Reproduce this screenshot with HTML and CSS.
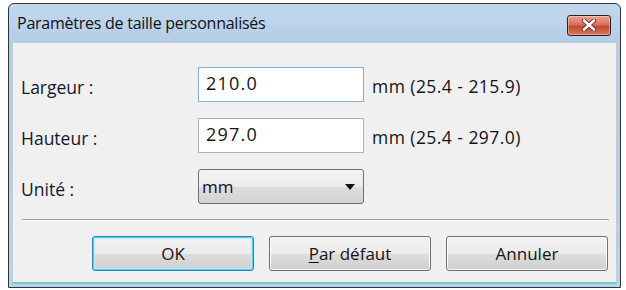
FILE: index.html
```html
<!DOCTYPE html>
<html lang="fr">
<head>
<meta charset="utf-8">
<title>Paramètres de taille personnalisés</title>
<link rel="stylesheet" href="styles.css">
</head>
<body>
<div class="window">
  <div class="titlebar">
    <span class="title">Paramètres de taille personnalisés</span>
    <button class="close" aria-label="Fermer">
      <svg width="16" height="12" viewBox="0 0 16 12"><path d="M3 1.5 L13 10.5 M13 1.5 L3 10.5" stroke="#5a2020" stroke-width="4.2" stroke-linecap="round"/><path d="M3 1.5 L13 10.5 M13 1.5 L3 10.5" stroke="#ffffff" stroke-width="2.6" stroke-linecap="round"/></svg>
    </button>
  </div>
  <div class="client">
    <div class="form">
      <label class="lbl">Largeur :</label>
      <div class="field focus">210.0</div>
      <span class="range">mm (25.4 - 215.9)</span>
      <label class="lbl">Hauteur :</label>
      <div class="field">297.0</div>
      <span class="range">mm (25.4 - 297.0)</span>
      <label class="lbl">Unité :</label>
      <div class="select"><span>mm</span><span class="arrow"></span></div>
      <span></span>
    </div>
    <div class="sep"></div>
    <div class="buttons">
      <button class="btn default">OK</button>
      <button class="btn"><u>P</u>ar défaut</button>
      <button class="btn">Annuler</button>
    </div>
  </div>
</div>
</body>
</html>
```
FILE: styles.css
```css
html, body { margin: 0; padding: 0; background: #ffffff; }
body { width: 626px; height: 290px; overflow: hidden; font-family: "Open Sans", "Noto Sans", sans-serif; }
.window {
  margin: 3px 0 0 8px;
  width: 613px;
  height: 285px;
  border: 1px solid #2f3336;
  border-radius: 6px 6px 0 0;
  background: linear-gradient(#c3d8ee, #b3cde8 40px, #b9d1ea);
  display: flex;
  flex-direction: column;
  box-sizing: border-box;
}
.titlebar {
  height: 38px;
  display: flex;
  align-items: center;
  justify-content: space-between;
  padding: 0 9px 0 8px;
  flex: none;
}
.title { font-size: 16px; color: #111; letter-spacing: -0.25px; }
.close {
  width: 44px; height: 21px;
  border: 1px solid #3a1d1d;
  border-radius: 3px;
  background: linear-gradient(#e8a493, #d7705b 45%, #c24a34 55%, #d9775f);
  display: flex; align-items: center; justify-content: center;
  padding: 0; margin-top: 4px;
  box-shadow: inset 0 0 0 1px rgba(255,255,255,0.35);
}
.close svg { display: block; }
.client {
  flex: 1;
  margin: 0 3px 3px 3px;
  background: #f0f0f0;
  border: 1px solid #c4ccd4;
  border-bottom: 2px solid #6fd0d0;
  display: flex;
  flex-direction: column;
  color: #111;
}
.form {
  display: grid;
  grid-template-columns: 169px 166px auto;
  grid-auto-rows: 35px;
  row-gap: 16px;
  column-gap: 8px;
  align-items: center;
  padding: 24px 0 0 8px;
  font-size: 17.5px;
}
.lbl { color: #14182a; padding-top: 5px; }
.field {
  height: 35px; box-sizing: border-box;
  border: 1px solid #acb3bb;
  background: #fff;
  padding: 0 7px 3px;
  display: flex; align-items: center;
  font-size: 18px;
  letter-spacing: 1.2px;
  color: #141414;
}
.field.focus { border-color: #87aed3; }
.range { color: #141414; padding-top: 3px; letter-spacing: 0.45px; }
.select {
  height: 35px; box-sizing: border-box;
  border: 1px solid #707070;
  border-radius: 3px;
  background: linear-gradient(#f4f4f4, #ebebeb 50%, #dddddd 51%, #d3d3d3);
  display: flex; align-items: center; justify-content: space-between;
  padding: 0 8px 0 3px;
  font-size: 17px;
}
.arrow { width: 0; height: 0; border-left: 5px solid transparent; border-right: 5px solid transparent; border-top: 6px solid #111; }
.sep {
  margin: 15px 7px 0 9px;
  height: 1px;
  background: #a0a0a0;
  border-bottom: 1px solid #ffffff;
}
.buttons {
  display: flex;
  justify-content: flex-end;
  gap: 15px;
  padding: 15px 8px 0 0;
}
.btn {
  width: 162px; height: 35px;
  border: 1px solid #707070;
  border-radius: 3px;
  background: linear-gradient(#f2f2f2, #ebebeb 50%, #dddddd 51%, #cfcfcf);
  font-family: inherit;
  font-size: 17px;
  color: #141414;
  padding: 0;
  box-shadow: inset 0 0 0 1px #fcfcfc;
}
.btn u { text-decoration-thickness: 1px; text-underline-offset: 2px; }
.btn.default {
  border-color: #3c7fb1;
  box-shadow: inset 0 0 0 1px #48d5fb, inset 0 0 0 2px #c2eafd;
}
```
